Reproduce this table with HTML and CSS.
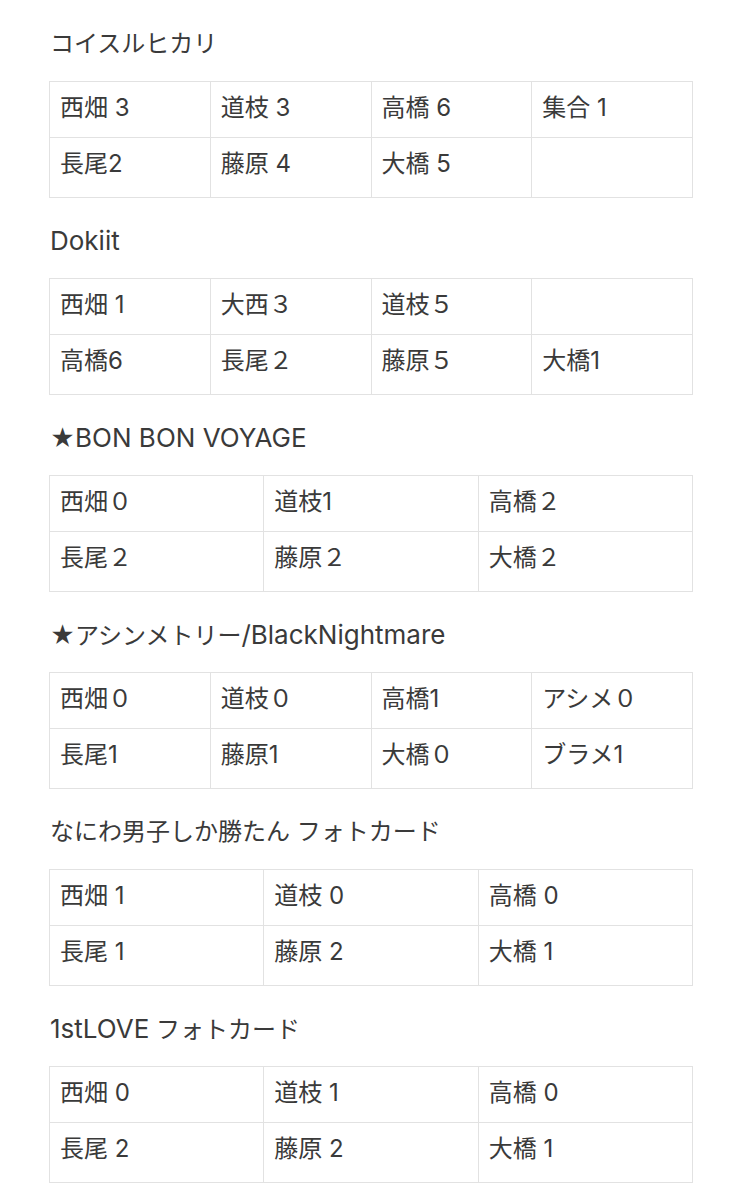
FILE: index.html
```html
<!DOCTYPE html>
<html lang="ja">
<head>
<meta charset="utf-8">
<link rel="stylesheet" href="styles.css">
</head>
<body>
<main class="page">
  <section class="block">
    <h2 class="title">コイスルヒカリ</h2>
    <table class="grid">
      <tr><td>西畑 3</td><td>道枝 3</td><td>高橋 6</td><td>集合 1</td></tr>
      <tr class="last"><td>長尾2</td><td>藤原 4</td><td>大橋 5</td><td></td></tr>
    </table>
  </section>
  <section class="block">
    <h2 class="title"><span class="en">Dokiit</span></h2>
    <table class="grid">
      <tr><td>西畑 1</td><td>大西３</td><td>道枝５</td><td></td></tr>
      <tr class="last"><td>高橋6</td><td>長尾２</td><td>藤原５</td><td>大橋1</td></tr>
    </table>
  </section>
  <section class="block">
    <h2 class="title">★<span class="en">BON BON VOYAGE</span></h2>
    <table class="grid">
      <tr><td>西畑０</td><td>道枝1</td><td>高橋２</td></tr>
      <tr class="last"><td>長尾２</td><td>藤原２</td><td>大橋２</td></tr>
    </table>
  </section>
  <section class="block">
    <h2 class="title">★アシンメトリー<span class="en">/BlackNightmare</span></h2>
    <table class="grid">
      <tr><td>西畑０</td><td>道枝０</td><td>高橋1</td><td>アシメ０</td></tr>
      <tr class="last"><td>長尾1</td><td>藤原1</td><td>大橋０</td><td>ブラメ1</td></tr>
    </table>
  </section>
  <section class="block">
    <h2 class="title">なにわ男子しか勝たん フォトカード</h2>
    <table class="grid">
      <tr><td>西畑 1</td><td>道枝 0</td><td>高橋 0</td></tr>
      <tr class="last"><td>長尾 1</td><td>藤原 2</td><td>大橋 1</td></tr>
    </table>
  </section>
  <section class="block">
    <h2 class="title"><span class="en">1stLOVE</span> フォトカード</h2>
    <table class="grid">
      <tr><td>西畑 0</td><td>道枝 1</td><td>高橋 0</td></tr>
      <tr class="last"><td>長尾 2</td><td>藤原 2</td><td>大橋 1</td></tr>
    </table>
  </section>
</main>
</body>
</html>
```
FILE: styles.css
```css
html, body {
  margin: 0;
  padding: 0;
  background: #ffffff;
}
body {
  font-family: Inter, "Noto Sans CJK JP", sans-serif;
  color: #3a3a3a;
}
.page {
  padding: 1px 0 0 49px;
  width: 644px;
}
.block {
  padding-top: 26px;
}
.title {
  margin: 0 0 0 1px;
  font-size: 24px;
  font-weight: 400;
  line-height: 34px;
  height: 34px;
  white-space: nowrap;
}
.en {
  font-size: 26px;
}
.grid {
  margin-top: 20px;
  width: 644px;
  table-layout: fixed;
  border-collapse: collapse;
}
.grid td {
  border: 1px solid #e2e2e2;
  font-size: 24px;
  line-height: 34px;
  padding: 9px 10px 12px;
  vertical-align: top;
  white-space: nowrap;
}
.grid .last td {
  padding-bottom: 16px;
}
```
